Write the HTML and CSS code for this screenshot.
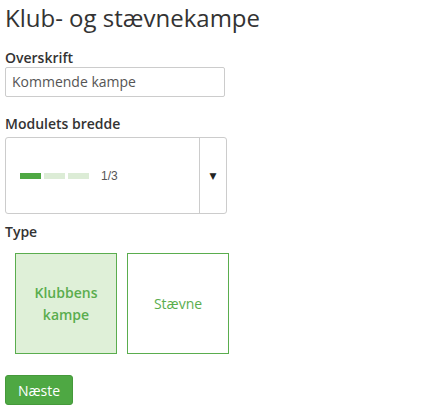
FILE: index.html
```html
<!DOCTYPE html>
<html lang="da">
<head>
<meta charset="utf-8">
<link rel="stylesheet" href="styles.css">
</head>
<body>
<div class="page">
  <h1 class="title">Klub- og stævnekampe</h1>
  <div class="field first">
    <label class="label tight">Overskrift</label>
    <div class="input">Kommende kampe</div>
  </div>
  <div class="field second">
    <label class="label">Modulets bredde</label>
    <div class="select">
      <div class="select-value">
        <span class="bar on"></span><span class="bar"></span><span class="bar"></span>
        <span class="frac">1/3</span>
      </div>
      <div class="select-arrow">▼</div>
    </div>
  </div>
  <div class="field">
    <label class="label">Type</label>
    <div class="cards">
      <div class="card active">Klubbens kampe</div>
      <div class="card">Stævne</div>
    </div>
  </div>
  <button class="btn">Næste</button>
</div>
</body>
</html>
```

FILE: styles.css
```css
html, body { margin: 0; padding: 0; background: #fff; }
body { font-family: "Open Sans", "DejaVu Sans", sans-serif; color: #333; font-size: 14px; }
.page { padding: 2px 5px 0 5px; }
.title { font-size: 24px; font-weight: 500; margin: 0 0 15px 0; line-height: 32px; color: #333; }
.field { margin-bottom: 13px; }
.field.first { margin-bottom: 18px; }
.field.second { margin-bottom: 9px; }
.label { display: block; font-weight: 600; font-size: 14px; line-height: 18px; margin-bottom: 2px; }
.label.tight { margin-bottom: 0; }
.input { height: 28px; border: 1px solid #ccc; border-radius: 2px; color: #555; line-height: 28px; padding: 0 6px; width: 206px; }
.select { display: flex; width: 220px; height: 75px; border: 1px solid #ccc; border-radius: 3px; margin-top: 4px; }
.select-value { flex: 1; display: flex; align-items: center; padding-left: 14px; border-right: 1px solid #ccc; }
.bar { width: 21px; height: 6px; background: #dcecd6; margin-right: 3px; }
.bar.on { background: #4ea843; }
.frac { margin-left: 9px; font-family: "Liberation Sans", Arial, sans-serif; font-size: 12px; color: #555; }
.select-arrow { width: 26px; display: flex; align-items: center; justify-content: center; font-size: 9px; color: #222; }
.cards { display: flex; gap: 10px; padding-left: 10px; margin-top: 12px; }
.card { width: 100px; height: 99px; border: 1px solid #5aad4e; color: #5aad4e; display: flex; align-items: center; justify-content: center; text-align: center; line-height: 22px; font-size: 14px; }
.card.active { background: #dff0d8; font-weight: 600; padding: 0 14px; box-sizing: border-box; width: 102px; height: 101px; }
.btn { margin-top: 8px; background: #4ea843; border: 1px solid #45993b; color: #fff; font-family: "Open Sans", sans-serif; font-size: 14px; border-radius: 3px; height: 30px; width: 68px; padding: 0; }
```
